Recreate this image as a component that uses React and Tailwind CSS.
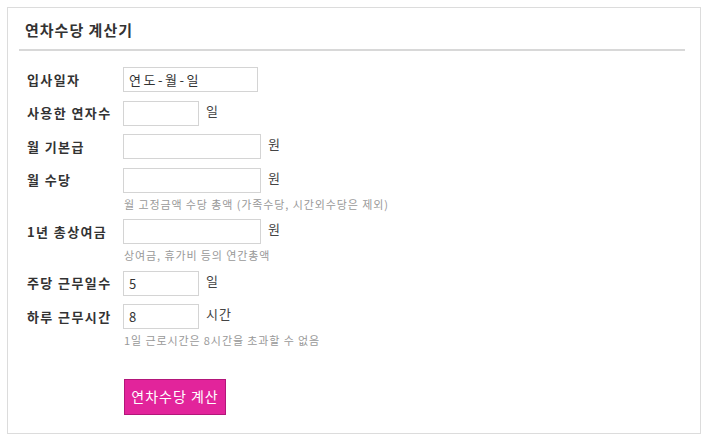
import { useState } from "react";

const Row = ({ label, width, value, placeholder, suffix, help }) => (
	<div className="flex flex-col">
		<div className="flex items-start">
			<label className="w-[96px] h-[25px] flex items-center text-[13px] font-bold tracking-[1.4px] text-[#333]">
				{label}
			</label>
			<input
				type="text"
				defaultValue={value}
				placeholder={placeholder}
				className={`${width} h-[25px] border border-[#d4d4d4] px-[5px] text-[13px] tracking-[1px] text-[#333] placeholder:text-[#333] placeholder:tracking-[2.5px] outline-none`}
			/>
			{suffix && (
				<span className="ml-[7px] text-[13px] leading-[20px] tracking-[1px] text-[#444]">{suffix}</span>
			)}
		</div>
		{help && (
			<p className="ml-[97px] mt-[4px] text-[11px] leading-[14px] tracking-[0.9px] text-[#999]">{help}</p>
		)}
	</div>
);

const App = () => {
	const [result, setResult] = useState(null);

	return (
		<div
			className="w-[708px] h-[441px] bg-white p-[7px]"
			style={{ fontFamily: '"Noto Sans CJK KR", "Noto Sans", sans-serif' }}
		>
			<div className="w-[694px] h-[427px] border border-[#dcdcdc] flex flex-col">
				<div className="h-[43px] ml-[11px] mr-[15px] border-b-2 border-[#d8d8d8] flex items-center pl-[6px] pt-[4px]">
					<h2 className="text-[15px] font-bold tracking-[1px] text-[#333]">연차수당 계산기</h2>
				</div>

				<div className="flex flex-col gap-[8.5px] pl-[19px] pt-[16px]">
					<Row label="입사일자" width="w-[135px]" placeholder="연도-월-일" />
					<Row label="사용한 연자수" width="w-[76px]" suffix="일" />
					<Row label="월 기본급" width="w-[138px]" suffix="원" />
					<Row
						label="월 수당"
						width="w-[138px]"
						suffix="원"
						help="월 고정금액 수당 총액 (가족수당, 시간외수당은 제외)"
					/>
					<Row
						label="1년 총상여금"
						width="w-[138px]"
						suffix="원"
						help="상여금, 휴가비 등의 연간총액"
					/>
					<Row label="주당 근무일수" width="w-[76px]" value="5" suffix="일" />
					<Row
						label="하루 근무시간"
						width="w-[76px]"
						value="8"
						suffix="시간"
						help="1일 근로시간은 8시간을 초과할 수 없음"
					/>

					<button
						className="ml-[97px] mt-[23px] w-[102px] h-[36px] bg-[#e2249b] border border-[#b3167a] text-white text-[14px] tracking-[1px]"
						onClick={() => setResult(!result)}
					>
						연차수당 계산
					</button>
				</div>
			</div>
		</div>
	);
};

export default App;
